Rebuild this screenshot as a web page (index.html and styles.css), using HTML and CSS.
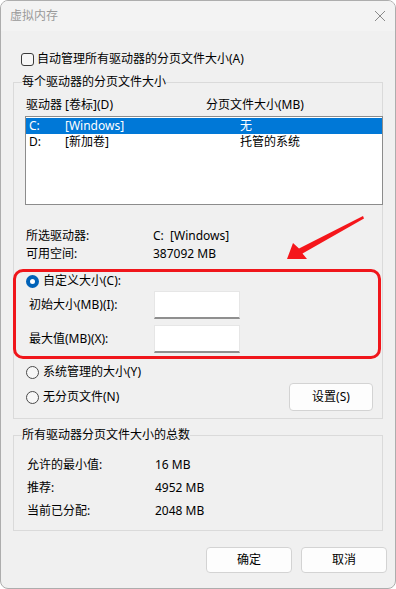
FILE: index.html
```html
<!DOCTYPE html>
<html lang="zh-CN">
<head>
<meta charset="utf-8">
<title>虚拟内存</title>
<link rel="stylesheet" href="styles.css">
</head>
<body>
<div class="window">
  <div class="titlebar">
    <span class="title">虚拟内存</span>
    <svg class="close" width="12" height="12" viewBox="0 0 12 12"><path d="M1 1L11 11M11 1L1 11" stroke="#8a8a8a" stroke-width="1" fill="none"/></svg>
  </div>
  <div class="content">
    <div class="check-row"><span class="checkbox"></span><span>自动管理所有驱动器的分页文件大小(A)</span></div>
    <fieldset class="group group-drives">
      <legend>每个驱动器的分页文件大小</legend>
      <div class="list-head"><span class="col-drive">驱动器 [卷标](D)</span><span>分页文件大小(MB)</span></div>
      <div class="listbox">
        <div class="list-row selected"><span class="c-letter">C:</span><span class="c-label">[Windows]</span><span>无</span></div>
        <div class="list-row"><span class="c-letter">D:</span><span class="c-label">[新加卷]</span><span>托管的系统</span></div>
      </div>
      <div class="info">
        <div class="info-row"><span class="k">所选驱动器:</span><span>C:&nbsp;&nbsp;[Windows]</span></div>
        <div class="info-row"><span class="k">可用空间:</span><span>387092 MB</span></div>
      </div>
      <div class="radio-row first"><span class="radio checked"></span><span>自定义大小(C):</span></div>
      <div class="field-row"><span class="fk">初始大小(MB)(I):</span><span class="input"></span></div>
      <div class="field-row second"><span class="fk">最大值(MB)(X):</span><span class="input"></span></div>
      <div class="radio-row sys"><span class="radio"></span><span>系统管理的大小(Y)</span></div>
      <div class="set-row">
        <div class="radio-row"><span class="radio"></span><span>无分页文件(N)</span></div>
        <button class="btn btn-set">设置(S)</button>
      </div>
    </fieldset>
    <fieldset class="group group-total">
      <legend>所有驱动器分页文件大小的总数</legend>
      <div class="total-row first"><span class="tk">允许的最小值:</span><span>16 MB</span></div>
      <div class="total-row"><span class="tk">推荐:</span><span>4952 MB</span></div>
      <div class="total-row"><span class="tk">当前已分配:</span><span>2048 MB</span></div>
    </fieldset>
    <div class="actions">
      <button class="btn btn-action">确定</button>
      <button class="btn btn-action">取消</button>
    </div>
  </div>
</div>
<div class="highlight"></div>
<svg class="arrow" width="396" height="589" viewBox="0 0 396 589">
  <polygon points="287,259 293,243 299,248.5 363,216 364,218.5 302.5,253.5 307,259" fill="#f5161b"/>
</svg>
</body>
</html>
```
FILE: styles.css
```css
html, body {
  margin: 0;
  padding: 0;
  background: #ffffff;
}
body {
  font-family: "Noto Sans", "Noto Sans CJK SC", sans-serif;
  font-size: 12px;
  line-height: 16px;
  color: #000;
}
.window {
  width: 396px;
  height: 589px;
  box-sizing: border-box;
  border: 1px solid #adadad;
  border-radius: 8px;
  background: #f0f0f0;
  overflow: hidden;
}
.titlebar {
  height: 30px;
  background: #f3f3f3;
  display: flex;
  align-items: center;
  justify-content: space-between;
  padding-left: 9px;
  padding-right: 9px;
}
.title {
  color: #9a9a9a;
  font-size: 12px;
}
.close {
  display: block;
}
.content {
  padding: 0 12px;
}
.check-row {
  display: flex;
  align-items: center;
  height: 16px;
  margin-top: 20px;
  padding-left: 8px;
  gap: 3px;
}
.checkbox {
  width: 11px;
  height: 11px;
  border: 1px solid #3a3a3a;
  border-radius: 3px;
  background: #f7f7f7;
}
.group {
  margin: 0;
  border: 1px solid #dadada;
  min-width: 0;
}
.group legend {
  padding: 0;
  line-height: 16px;
}
.group-drives {
  margin-top: 7px;
  padding: 0 0 7px 11px;
}
.group-drives legend {
  margin-left: -3px;
}
.list-head {
  display: flex;
  margin-top: 7px;
  padding-left: 1px;
  height: 16px;
}
.col-drive {
  width: 180px;
}
.listbox {
  margin-top: 3px;
  margin-right: -1px;
  height: 89px;
  box-sizing: border-box;
  border: 1px solid #8c8c8c;
  background: #fff;
  padding: 1px 0;
}
.list-row {
  display: flex;
  height: 16px;
  padding-left: 3px;
}
.list-row.selected {
  background: #0078d7;
  color: #fff;
}
.c-letter {
  width: 36px;
}
.c-label {
  width: 175px;
}
.info {
  margin-top: 23px;
  display: flex;
  flex-direction: column;
  gap: 2px;
  padding-left: 1px;
}
.info-row {
  display: flex;
  height: 16px;
}
.k {
  width: 127px;
}
.radio-row {
  display: flex;
  align-items: center;
  height: 16px;
  gap: 4px;
  padding-left: 1px;
}
.radio-row.first {
  margin-top: 11px;
}
.radio-row.sys {
  margin-top: 11px;
}
.radio {
  width: 11px;
  height: 11px;
  border: 1px solid #4a4a4a;
  border-radius: 50%;
  background: #f7f7f7;
  box-sizing: content-box;
}
.radio.checked {
  width: 5px;
  height: 5px;
  border: 4px solid #0062b8;
  background: #fff;
}
.field-row {
  display: flex;
  align-items: center;
  margin-top: 2px;
  padding-left: 4px;
}
.field-row.second {
  margin-top: 6px;
}
.fk {
  width: 125px;
}
.input {
  width: 86px;
  height: 28px;
  box-sizing: border-box;
  background: #fff;
  border: 1px solid #e6e6e6;
  border-bottom: 2px solid #8f8f8f;
}
.set-row {
  display: flex;
  align-items: center;
  justify-content: space-between;
  margin-top: 3px;
  padding-right: 9px;
}
.btn {
  font-family: inherit;
  font-size: 12px;
  line-height: 16px;
  color: #000;
  background: #fdfdfd;
  border: 1px solid #d3d3d3;
  border-radius: 4px;
  padding: 0;
  box-sizing: border-box;
}
.btn-set {
  width: 84px;
  height: 28px;
}
.group-total {
  margin-top: 8px;
  padding: 0 0 11px 13px;
}
.group-total legend {
  margin-left: -5px;
}
.total-row {
  display: flex;
  height: 16px;
  margin-top: 7px;
}
.total-row.first {
  margin-top: 14px;
}
.tk {
  width: 128px;
}
.actions {
  display: flex;
  justify-content: flex-end;
  gap: 9px;
  margin-top: 16px;
  margin-right: -4px;
}
.btn-action {
  width: 86px;
  height: 26px;
}
.highlight {
  position: absolute;
  left: 13px;
  top: 269px;
  width: 368px;
  height: 90px;
  box-sizing: border-box;
  border: 3px solid #f0161b;
  border-radius: 10px;
  pointer-events: none;
}
.arrow {
  position: absolute;
  left: 0;
  top: 0;
  pointer-events: none;
}
```
